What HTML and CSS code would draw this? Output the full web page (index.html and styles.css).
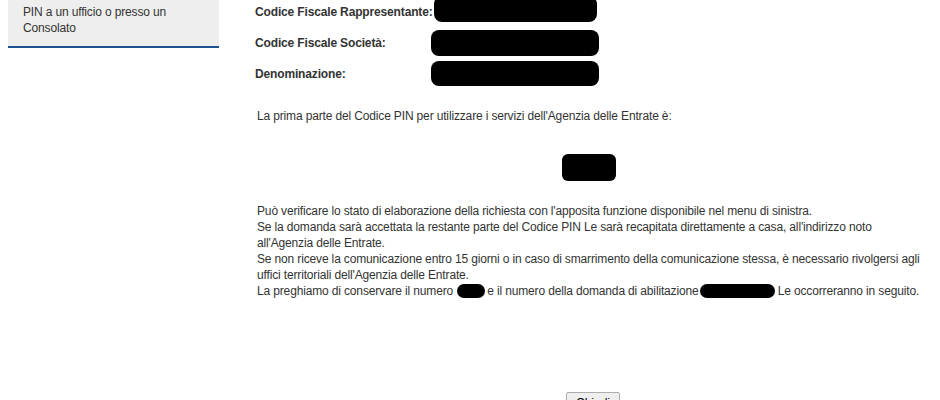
FILE: index.html
```html
<!DOCTYPE html>
<html lang="it">
<head>
<meta charset="utf-8">
<title>Richiesta Codice PIN</title>
<link rel="stylesheet" href="styles.css">
</head>
<body>
<div class="page">
  <aside class="sidebar">
    <div class="nav-item">PIN a un ufficio o presso un Consolato</div>
  </aside>
  <main class="main">
    <div class="form">
      <div class="row row1">
        <span class="label">Codice Fiscale Rappresentante:</span>
        <span class="blob blob1"></span>
      </div>
      <div class="row row2">
        <span class="label">Codice Fiscale Società:</span>
        <span class="blob blob2"></span>
      </div>
      <div class="row row3">
        <span class="label">Denominazione:</span>
        <span class="blob blob3"></span>
      </div>
    </div>
    <p class="intro">La prima parte del Codice PIN per utilizzare i servizi dell'Agenzia delle Entrate è:</p>
    <div class="pin"><span class="blob pin-blob"></span></div>
    <p class="info">Può verificare lo stato di elaborazione della richiesta con l'apposita funzione disponibile nel menu di sinistra.<br>Se la domanda sarà accettata la restante parte del Codice PIN Le sarà recapitata direttamente a casa, all'indirizzo noto<br>all'Agenzia delle Entrate.<br>Se non riceve la comunicazione entro 15 giorni o in caso di smarrimento della comunicazione stessa, è necessario rivolgersi agli<br>uffici territoriali dell'Agenzia delle Entrate.<br><span class="nowrap">La preghiamo di conservare il numero <span class="blob inl-short"></span>e il numero della domanda di abilitazione<span class="blob inl-long"></span> Le occorreranno in seguito.</span></p>
    <div class="actions"><button class="btn" type="button">Chiudi</button></div>
  </main>
</div>
</body>
</html>
```

FILE: styles.css
```css
html, body {
  margin: 0;
  padding: 0;
  background: #ffffff;
  overflow: hidden;
}

body {
  font-family: "Liberation Sans", Arial, sans-serif;
  font-size: 12px;
  line-height: 16px;
  letter-spacing: -0.15px;
  color: #333333;
}

.page {
  display: grid;
  grid-template-columns: 211px 668px;
  column-gap: 36px;
  padding-left: 8px;
  align-items: start;
}

.nav-item {
  background: #eeeeee;
  padding: 4px 15px 10px 15px;
  border-bottom: 2px solid #1d5192;
  color: #333333;
}

.main {
  display: flex;
  flex-direction: column;
}

.form {
  display: flex;
  flex-direction: column;
  margin-top: -4px;
}

.row {
  display: flex;
  align-items: center;
}

.row1 { height: 26px; padding-top: 3px; align-items: center; }
.row2 { height: 26px; margin-top: 5px; }
.row3 { height: 25px; margin-top: 5px; }

.label {
  width: 176px;
  font-weight: bold;
  white-space: nowrap;
}

.blob {
  display: inline-block;
  background: #000000;
  border-radius: 8px;
}

.row1 .blob1 { align-self: flex-start; margin-top: -3px; }

.blob1 { width: 163px; height: 26px; margin-left: 3px; }
.blob2 { width: 168px; height: 26px; }
.blob3 { width: 168px; height: 25px; }

.intro {
  margin: 22px 0 0 2px;
}

.pin {
  display: flex;
  justify-content: center;
  margin-top: 30px;
}

.pin-blob {
  width: 54px;
  height: 27px;
  border-radius: 6px;
}

.info {
  margin: 22px 0 0 2px;
}

.nowrap {
  white-space: nowrap;
}

.inl-short {
  width: 28px;
  height: 14px;
  vertical-align: -3px;
  border-radius: 7px;
  margin-left: 1px;
  margin-right: 2px;
}

.inl-long {
  width: 75px;
  height: 14px;
  vertical-align: -3px;
  border-radius: 7px;
  margin-left: 1px;
}

.actions {
  display: flex;
  justify-content: center;
  margin-top: 93px;
  padding-left: 8px;
}

.btn {
  font-family: "Liberation Sans", Arial, sans-serif;
  font-size: 12px;
  width: 54px;
  height: 22px;
  background: #efefef;
  border: 1px solid #adadad;
  border-radius: 2px;
  color: #000000;
  padding: 0;
}
```
